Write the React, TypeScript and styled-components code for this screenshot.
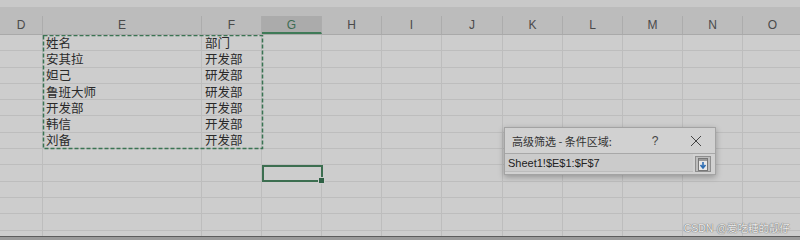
import { FC, Fragment } from "react";
import styled, { createGlobalStyle } from "styled-components";

const GlobalStyle = createGlobalStyle`
  html, body {
    margin: 0;
    padding: 0;
    background: #cdcdcd;
  }
`;

const COLS = ["D", "E", "F", "G", "H", "I", "J", "K", "L", "M", "N", "O"];
const COL_TEMPLATE = "43px 159px 60px 60px 60px 60px 61px 60px 60px 60px 60px 60px";
const ROW_H = 16.3;

const DATA: Array<[string, string]> = [
  ["姓名", "部门"],
  ["安其拉", "开发部"],
  ["妲己", "研发部"],
  ["鲁班大师", "研发部"],
  ["开发部", "开发部"],
  ["韩信", "开发部"],
  ["刘备", "开发部"],
];

const Page = styled.div`
  position: relative;
  width: 800px;
  height: 240px;
  overflow: hidden;
  display: flex;
  flex-direction: column;
  background: #cdcdcd;
  font-family: "Noto Sans CJK SC", "Liberation Sans", sans-serif;
`;

const TopStrip = styled.div`
  flex: 0 0 7px;
  background: #c9c9c9;
`;

const HeaderBand = styled.div`
  flex: 0 0 9px;
  background: #bcbcbc;
`;

const HeaderRow = styled.div`
  flex: 0 0 16px;
  display: grid;
  grid-template-columns: ${COL_TEMPLATE};
  background: #bcbcbc;
  border-bottom: 1px solid #a9a9a9;
  box-sizing: border-box;
`;

const HeaderCell = styled.div<{ $active?: boolean }>`
  display: flex;
  align-items: center;
  justify-content: center;
  border-right: 1px solid #acacac;
  font-family: "Liberation Sans", sans-serif;
  font-size: 12px;
  color: ${(p) => (p.$active ? "#3d6b52" : "#4a4a4a")};
  background: ${(p) => (p.$active ? "#ababab" : "transparent")};
  border-bottom: ${(p) => (p.$active ? "2px solid #3f7a57" : "none")};
  box-sizing: border-box;
  padding-top: ${(p) => (p.$active ? "2px" : "0")};
`;

const Body = styled.div`
  position: relative;
  flex: 1 1 auto;
  overflow: hidden;
  display: grid;
  grid-template-columns: ${COL_TEMPLATE};
  grid-auto-rows: ${ROW_H}px;
  align-content: start;
`;

const Cell = styled.div`
  display: flex;
  align-items: center;
  border-right: 1px solid #bdbdbd;
  border-bottom: 1px solid #bdbdbd;
  box-sizing: border-box;
  padding-left: 3px;
  font-size: 12.5px;
  line-height: 14px;
  color: #2a2a2a;
  white-space: nowrap;
`;

const Footer = styled.div`
  flex: 0 0 3px;
  background: #9a9a9a;
  border-top: 1px solid #5c5c5c;
`;

const CopyMarquee = styled.svg`
  position: absolute;
  left: 42px;
  top: -1px;
  width: 222px;
  height: 116px;
  pointer-events: none;
`;

const ActiveCell = styled.div`
  position: absolute;
  left: 262px;
  top: 130px;
  width: 61px;
  height: 17px;
  border: 2px solid #3c6e50;
  box-sizing: border-box;

  &:after {
    content: "";
    position: absolute;
    right: -4px;
    bottom: -4px;
    width: 5px;
    height: 5px;
    background: #2f6145;
    border: 1px solid #cdcdcd;
  }
`;

const Dialog = styled.div`
  position: absolute;
  left: 504px;
  top: 127px;
  width: 212px;
  height: 48px;
  display: flex;
  flex-direction: column;
  background: #d1d1d1;
  border: 1px solid #a3a3a3;
  box-sizing: border-box;
  box-shadow: 0 2px 6px rgba(0, 0, 0, 0.28);
`;

const TitleBar = styled.div`
  flex: 0 0 25px;
  display: flex;
  align-items: center;
  padding-left: 7px;
  font-size: 11px;
  color: #333;
`;

const TitleText = styled.span`
  flex: 1 1 auto;
`;

const Help = styled.span`
  width: 20px;
  text-align: center;
  font-family: "Liberation Sans", sans-serif;
  font-size: 12px;
  color: #444;
`;

const CloseIcon = styled.svg`
  width: 12px;
  height: 12px;
  margin: 0 13px 0 25px;
`;

const InputRow = styled.div`
  flex: 1 1 auto;
  display: flex;
  align-items: stretch;
  border-top: 1px solid #a8a8a8;
  padding: 0 2px 2px 0;
`;

const RangeInput = styled.div`
  flex: 1 1 auto;
  display: flex;
  align-items: center;
  padding-left: 3px;
  font-family: "Liberation Sans", sans-serif;
  font-size: 11px;
  color: #222;
  background: #cbcbcb;
  border-bottom: 1px solid #bcbcbc;
`;

const CollapseButton = styled.div`
  flex: 0 0 14px;
  margin: 2px 2px 0 2px;
  display: flex;
  align-items: center;
  justify-content: center;
  border: 1px solid #8e8e8e;
  background: #bdbdbd;
`;

const Watermark = styled.div`
  position: absolute;
  right: 10px;
  bottom: 5px;
  font-size: 10.5px;
  color: rgba(245, 245, 245, 0.95);
  text-shadow: 0 0 1px #6a6a6a, 0 0 1px #6a6a6a;
  font-family: "Liberation Sans", "Noto Sans CJK SC", sans-serif;
`;

const ROWS = 13;

const App: FC = () => {
  return (
    <Fragment>
      <GlobalStyle />
      <Page>
        <TopStrip />
        <HeaderBand />
        <HeaderRow>
          {COLS.map((c) => (
            <HeaderCell key={c} $active={c === "G"}>
              {c}
            </HeaderCell>
          ))}
        </HeaderRow>
        <Body>
          {Array.from({ length: ROWS }).map((_, r) =>
            COLS.map((c) => {
              let text = "";
              if (r < DATA.length) {
                if (c === "E") text = DATA[r][0];
                if (c === "F") text = DATA[r][1];
              }
              return <Cell key={`${c}${r}`}>{text}</Cell>;
            })
          )}
          <CopyMarquee viewBox="0 0 222 116">
            <rect
              x="1.5"
              y="1.5"
              width="219"
              height="113"
              fill="none"
              stroke="#3b7453"
              strokeWidth="1.5"
              strokeDasharray="4 2"
            />
          </CopyMarquee>
          <ActiveCell />
        </Body>
        <Footer />
        <Dialog>
          <TitleBar>
            <TitleText>高级筛选 - 条件区域:</TitleText>
            <Help>?</Help>
            <CloseIcon viewBox="0 0 12 12">
              <path d="M1 1 L11 11 M11 1 L1 11" stroke="#444" strokeWidth="1" />
            </CloseIcon>
          </TitleBar>
          <InputRow>
            <RangeInput>Sheet1!$E$1:$F$7</RangeInput>
            <CollapseButton>
              <svg width="10" height="13" viewBox="0 0 10 13">
                <rect x="0.5" y="0.5" width="9" height="12" fill="#e8e8e8" stroke="#777" />
                <rect x="1" y="1" width="8" height="2" fill="#9a9a9a" />
                <path d="M5 4 V9 M2.5 7 L5 10 L7.5 7" stroke="#2d6db3" strokeWidth="1.6" fill="none" />
              </svg>
            </CollapseButton>
          </InputRow>
        </Dialog>
        <Watermark>CSDN @爱吃糖的靓仔</Watermark>
      </Page>
    </Fragment>
  );
};

export default App;
